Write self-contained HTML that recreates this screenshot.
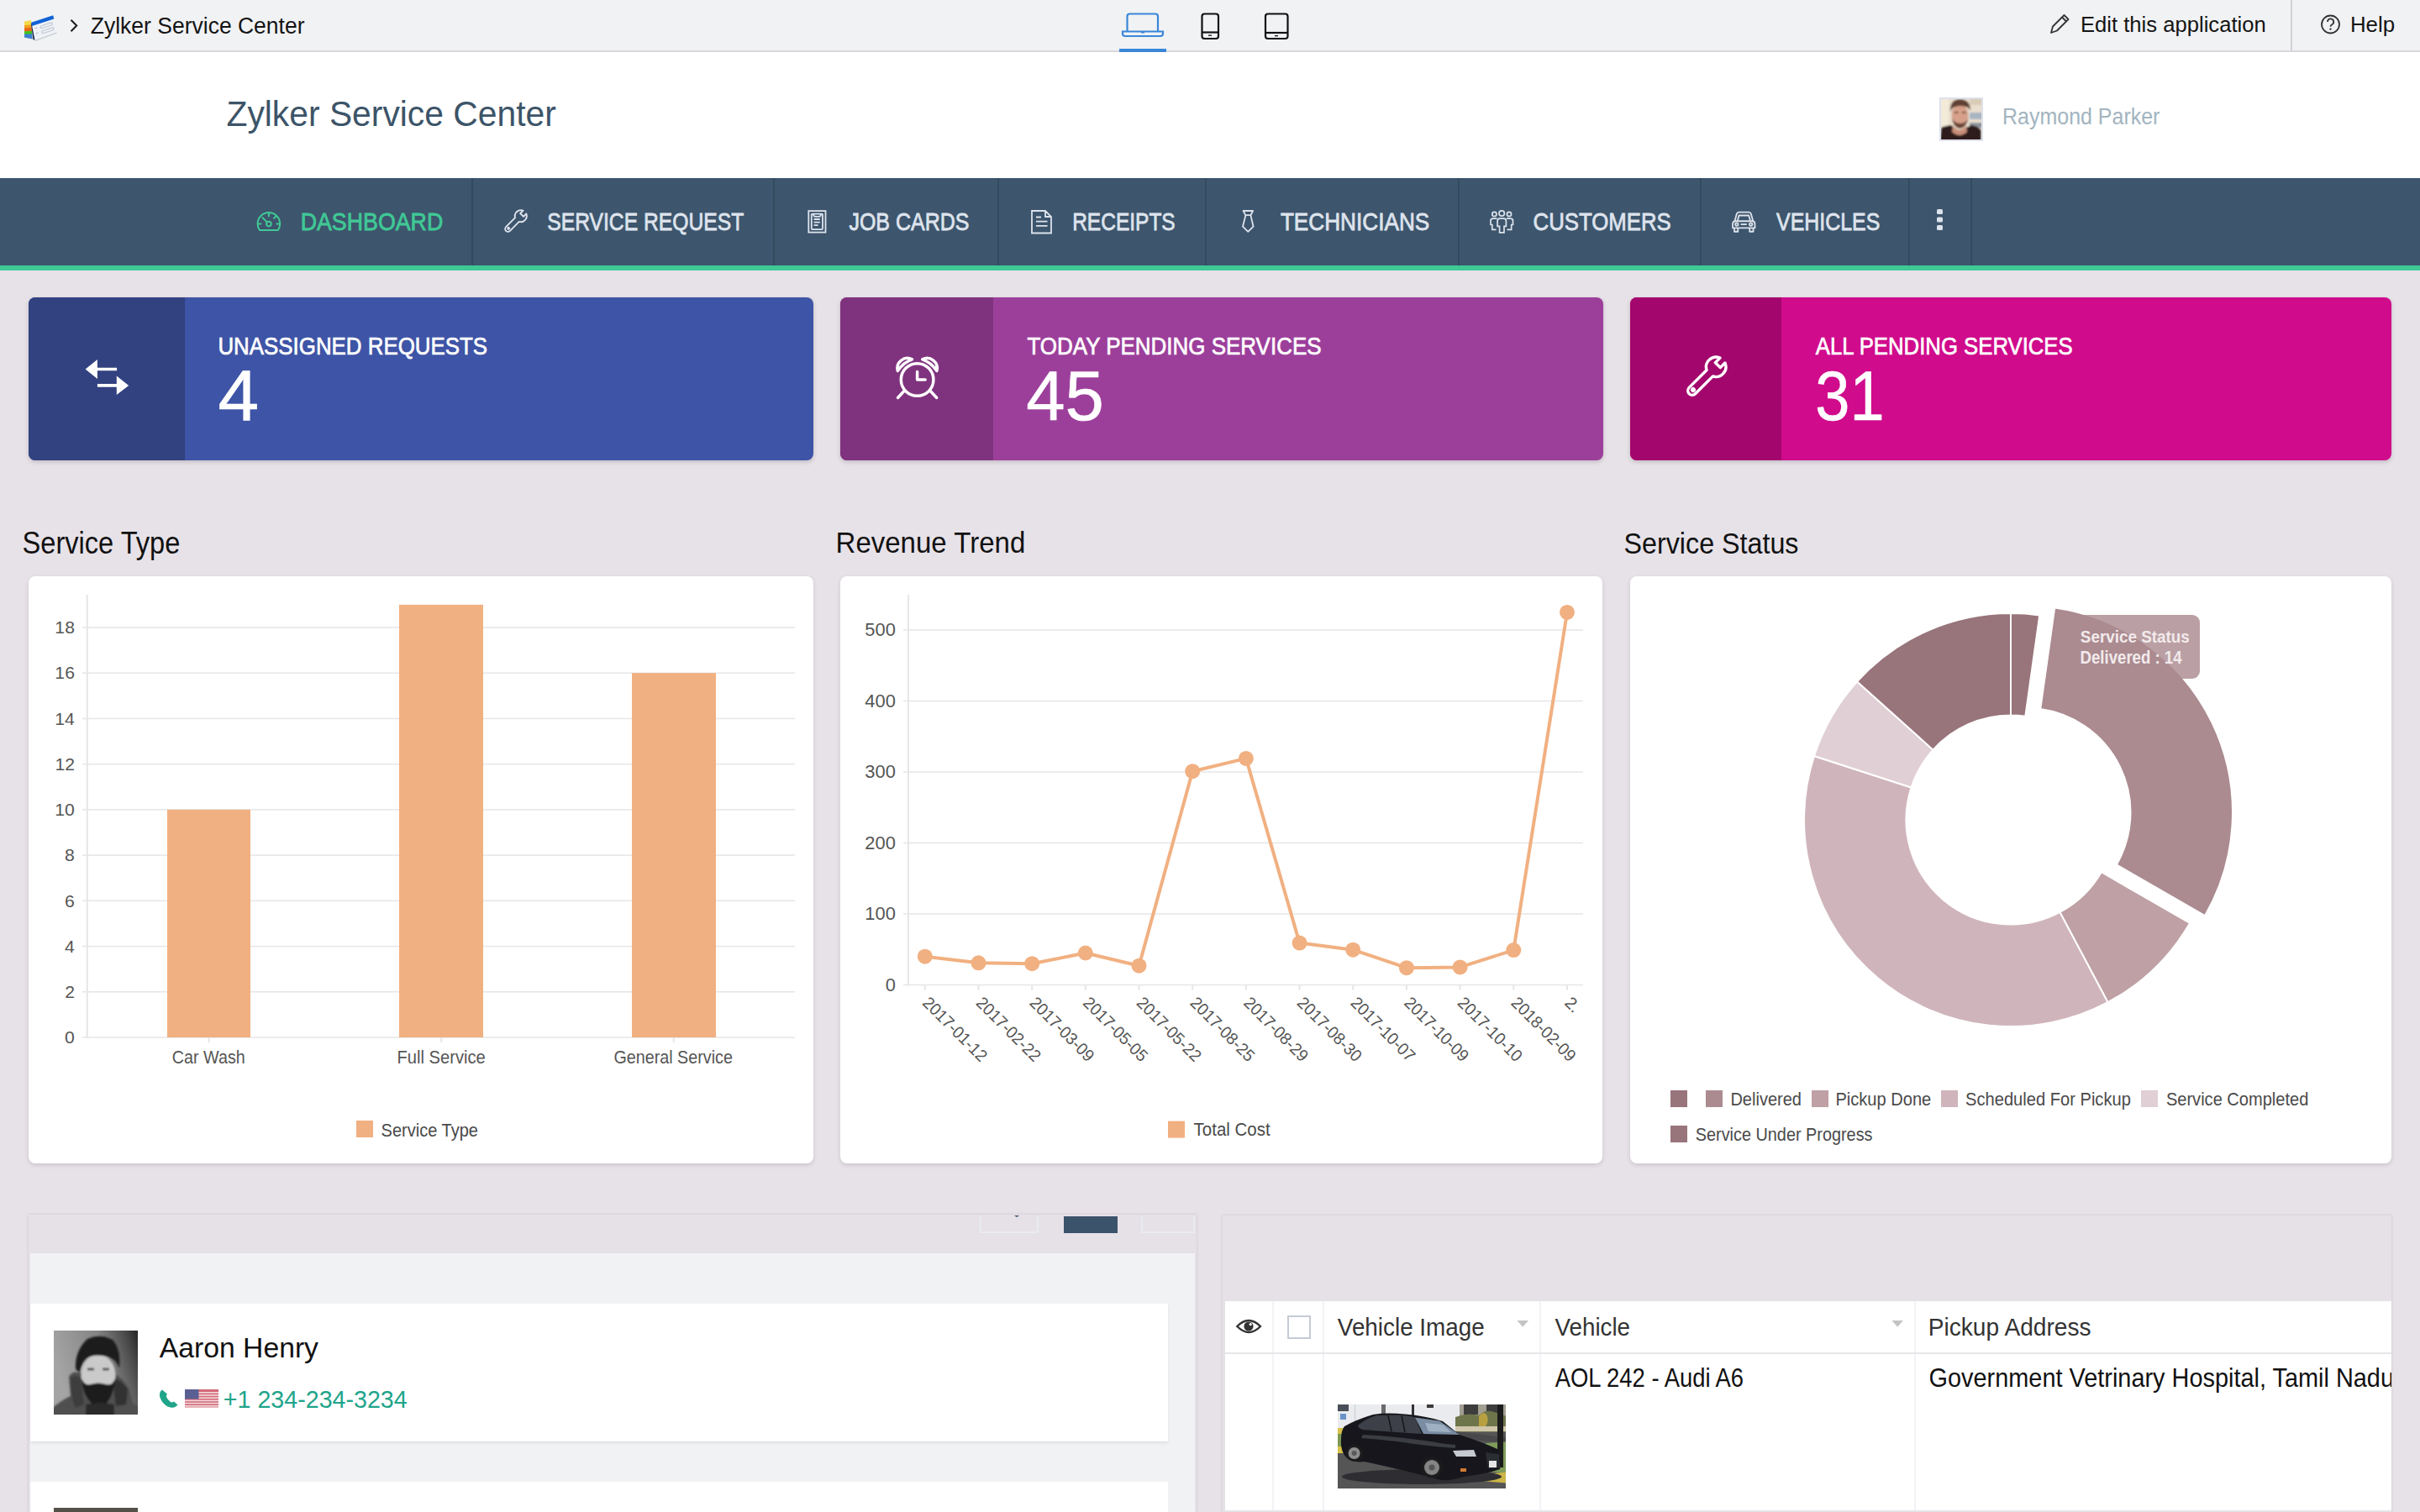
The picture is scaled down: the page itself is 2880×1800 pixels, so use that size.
<!DOCTYPE html>
<html><head><meta charset="utf-8"><title>Zylker Service Center</title>
<style>
*{margin:0;padding:0;box-sizing:border-box}
html,body{width:2880px;height:1800px;overflow:hidden;background:#e7e2e8;font-family:"Liberation Sans",sans-serif}
svg text{font-family:"Liberation Sans",sans-serif}
</style></head><body>
<div style="position:absolute;left:0px;top:0px;width:2880px;height:60px;background:#f1f2f4"></div>
<div style="position:absolute;left:0px;top:61px;width:2880px;height:151px;background:#fff"></div>
<div style="position:absolute;left:0px;top:60px;width:2880px;height:2px;background:#d8d8da"></div>
<div style="position:absolute;left:0px;top:212px;width:2880px;height:104px;background:#3d556d"></div>
<div style="position:absolute;left:0px;top:316px;width:2880px;height:6px;background:#40c895"></div>
<div style="position:absolute;left:34px;top:354px;width:934px;height:194px;border-radius:8px;overflow:hidden;background:#3e54a6;box-shadow:0 2px 5px rgba(60,40,60,.22)"><div style="position:absolute;left:0;top:0;width:186px;height:194px;background:#32417f"></div></div>
<div style="position:absolute;left:1000px;top:354px;width:908px;height:194px;border-radius:8px;overflow:hidden;background:#9c3f9b;box-shadow:0 2px 5px rgba(60,40,60,.22)"><div style="position:absolute;left:0;top:0;width:182px;height:194px;background:#7f337e"></div></div>
<div style="position:absolute;left:1940px;top:354px;width:906px;height:194px;border-radius:8px;overflow:hidden;background:#d00b8c;box-shadow:0 2px 5px rgba(60,40,60,.22)"><div style="position:absolute;left:0;top:0;width:180px;height:194px;background:#a3066c"></div></div>
<div style="position:absolute;left:34px;top:686px;width:934px;height:699px;background:#fff;border-radius:8px;box-shadow:0 2px 5px rgba(60,40,60,.16)"></div>
<div style="position:absolute;left:1000px;top:686px;width:907px;height:699px;background:#fff;border-radius:8px;box-shadow:0 2px 5px rgba(60,40,60,.16)"></div>
<div style="position:absolute;left:1940px;top:686px;width:906px;height:699px;background:#fff;border-radius:8px;box-shadow:0 2px 5px rgba(60,40,60,.16)"></div>
<div style="position:absolute;left:34px;top:1446px;width:1390px;height:354px;background:#e6e1e7;box-shadow:0 0 3px rgba(60,40,60,.18)"></div>
<div style="position:absolute;left:36px;top:1492px;width:1386px;height:308px;background:#f1f2f4"></div>
<div style="position:absolute;left:36px;top:1552px;width:1354px;height:164px;background:#fff;box-shadow:0 2px 3px rgba(0,0,0,.08)"></div>
<div style="position:absolute;left:36px;top:1764px;width:1354px;height:40px;background:#fff"></div>
<div style="position:absolute;left:1455px;top:1447px;width:1391px;height:353px;background:#e6e1e7;box-shadow:0 0 3px rgba(60,40,60,.18)"></div>
<div style="position:absolute;left:1458px;top:1549px;width:1388px;height:251px;background:#fff"></div>
<div style="position:absolute;left:1332px;top:58px;width:56px;height:4px;background:#3a86d8"></div>
<div style="position:absolute;left:2726px;top:0px;width:2px;height:60px;background:#d2d3d6"></div>
<div style="position:absolute;left:561px;top:212px;width:2px;height:104px;background:#344a5f"></div>
<div style="position:absolute;left:920px;top:212px;width:2px;height:104px;background:#344a5f"></div>
<div style="position:absolute;left:1187px;top:212px;width:2px;height:104px;background:#344a5f"></div>
<div style="position:absolute;left:1434px;top:212px;width:2px;height:104px;background:#344a5f"></div>
<div style="position:absolute;left:1735px;top:212px;width:2px;height:104px;background:#344a5f"></div>
<div style="position:absolute;left:2023px;top:212px;width:2px;height:104px;background:#344a5f"></div>
<div style="position:absolute;left:2271px;top:212px;width:2px;height:104px;background:#344a5f"></div>
<div style="position:absolute;left:2345px;top:212px;width:2px;height:104px;background:#344a5f"></div>
<div style="position:absolute;left:1266px;top:1448px;width:64px;height:20px;background:#3b536b"></div>
<div style="position:absolute;left:1514px;top:1549px;width:2px;height:251px;background:#f3f3f5"></div>
<div style="position:absolute;left:1574px;top:1549px;width:2px;height:251px;background:#f3f3f5"></div>
<div style="position:absolute;left:1832px;top:1549px;width:2px;height:251px;background:#f3f3f5"></div>
<div style="position:absolute;left:2278px;top:1549px;width:2px;height:251px;background:#f3f3f5"></div>
<div style="position:absolute;left:1458px;top:1610px;width:1388px;height:2px;background:#e6e6ea"></div>
<div style="position:absolute;left:1458px;top:1798px;width:1388px;height:2px;background:#e4e4e8"></div>
<svg style="position:absolute;left:0;top:0" width="2880" height="1800" viewBox="0 0 2880 1800">
<text x="107.81" y="40.20" font-size="28.20" fill="#141414" font-weight="normal" textLength="254.70" lengthAdjust="spacingAndGlyphs">Zylker Service Center</text>
<polyline points="84.5,23.8 91.2,30.5 84.5,37.2" fill="none" stroke="#1a1a1a" stroke-width="2"/>
<g>
<polygon points="29,25.5 37,24 38.5,46.5 29,44.5" fill="#f5d94a"/>
<polygon points="29,30 37.3,29.5 37.6,34 29,34.5" fill="#f0a020"/>
<polygon points="29,33.5 37.6,33 37.9,37.5 29,37.5" fill="#e8641c"/>
<polygon points="29,37.3 37.9,37 38.2,41 29,40.8" fill="#3fc21e"/>
<polygon points="29,40.5 38.2,40.5 38.5,46.5 29,44.5" fill="#3a7fd8"/>
<polygon points="36.8,28 38.5,27 41.8,47.8 39.5,47.2" fill="#1b2a55"/>
<polygon points="37.6,28.2 63.8,19.5 67.4,38.6 41.6,47.8" fill="#eef2f7"/>
<polygon points="37.2,26.8 63.2,18.2 64.2,22.4 38,31" fill="#1262d6"/>
<path d="M48.5,31 L61.5,26.8 q1.5,1.5 0.3,2.9 L49.3,33.7 q-1.8,-1 -0.8,-2.7z" fill="none" stroke="#c4c8cf" stroke-width="1.2"/>
<path d="M50,37 L63,32.8 q1.5,1.5 0.3,2.9 L50.8,39.7 q-1.8,-1 -0.8,-2.7z" fill="none" stroke="#c4c8cf" stroke-width="1.2"/>
<path d="M41.5,34 l3,-1 M42.5,40 l3,-1" stroke="#b8bcc4" stroke-width="1.2"/>
<polygon points="41.6,47.8 67.4,38.6 67.5,39.8 42,49" fill="#c8ccd4"/>
</g>
<g fill="none" stroke-width="2.2">
<path d="M1341.5,37 V19.5 a3,3 0 0 1 3,-3 H1375 a3,3 0 0 1 3,3 V37" stroke="#3a86d8"/>
<path d="M1336,37.5 H1384 V40 a3,3 0 0 1 -3,3 H1339 a3,3 0 0 1 -3,-3 Z" stroke="#3a86d8"/>
<rect x="1358" y="37.5" width="4" height="2" fill="#3a86d8" stroke="none"/>
<rect x="1430.5" y="16.5" width="19.5" height="29.5" rx="3" stroke="#111"/>
<line x1="1430.5" y1="38.5" x2="1450" y2="38.5" stroke="#111"/>
<rect x="1438" y="41.5" width="4" height="1.3" fill="#111" stroke="none"/>
<rect x="1506" y="16.5" width="26.5" height="29.5" rx="3" stroke="#111"/>
<line x1="1506" y1="39" x2="1532.5" y2="39" stroke="#111"/>
<rect x="1517" y="42" width="4" height="1.3" fill="#111" stroke="none"/>
</g>
<path d="M2441,39 L2443,31.5 L2456.5,18 L2461.5,23 L2448,36.5 Z M2454,20.5 L2459,25.5" fill="none" stroke="#333" stroke-width="1.8" stroke-linejoin="round"/>
<text x="2475.95" y="37.70" font-size="26.02" fill="#141414" font-weight="normal" textLength="220.75" lengthAdjust="spacingAndGlyphs">Edit this application</text>
<circle cx="2773.5" cy="29" r="10.5" fill="none" stroke="#333" stroke-width="1.8"/>
<path d="M2770,26 a3.6,3.6 0 1 1 5.2,3.2 c-1.2,.6 -1.7,1.2 -1.7,2.6" fill="none" stroke="#333" stroke-width="1.8"/><circle cx="2773.5" cy="34.6" r="1.2" fill="#333"/>
<text x="2796.93" y="37.70" font-size="26.02" fill="#141414" font-weight="normal" textLength="53.15" lengthAdjust="spacingAndGlyphs">Help</text>
<text x="269.48" y="150.30" font-size="43.31" fill="#3c5468" font-weight="normal" textLength="392.30" lengthAdjust="spacingAndGlyphs">Zylker Service Center</text>
<text x="2383.00" y="148.30" font-size="27.03" fill="#a2b4c0" font-weight="normal" textLength="187.45" lengthAdjust="spacingAndGlyphs">Raymond Parker</text>
<defs><filter id="bl1" x="-10%" y="-10%" width="120%" height="120%"><feGaussianBlur stdDeviation="1.2"/></filter>
<clipPath id="cpa"><rect x="2310" y="118" width="48" height="48"/></clipPath></defs>
<rect x="2308" y="116" width="52" height="52" fill="#dde1ec"/>
<g clip-path="url(#cpa)"><g filter="url(#bl1)">
<rect x="2305" y="113" width="58" height="58" fill="#eadfcf"/>
<rect x="2305" y="113" width="14" height="40" fill="#f3ead8"/>
<rect x="2344" y="113" width="19" height="12" fill="#d9cbb5"/>
<rect x="2344" y="134" width="19" height="8" fill="#a9b4c2"/>
<rect x="2344" y="146" width="19" height="6" fill="#8e949c"/>
<path d="M2310,152 q4,-2 12,-3 l4,3 q6,8 14,0 l6,-3 q8,1 12,6 v20 h-50z" fill="#2e1f1f"/>
<path d="M2324,150 q7,9 16,0 l1,7 q-9,8 -18,0z" fill="#c98f78"/>
<ellipse cx="2332.5" cy="137" rx="10" ry="13" fill="#d6a08a"/>
<path d="M2321,133 q-1,-14 11,-15 q13,0 13,14 q-2,-6 -12,-6 q-10,0 -12,7z" fill="#5e3f33"/>
<path d="M2323,140 q1,12 9.5,13 q8.5,-1 10,-13 q-2,7 -9.5,7 q-8,0 -10,-7z" fill="#6a4536"/>
<rect x="2326" y="133" width="4.5" height="1.8" fill="#6e4a3a"/><rect x="2335" y="133" width="4.5" height="1.8" fill="#6e4a3a"/>
</g></g>
<text x="357.66" y="274.00" font-size="29.43" fill="#40c895" font-weight="normal" textLength="169.64" lengthAdjust="spacingAndGlyphs" stroke="#40c895" stroke-width="0.8">DASHBOARD</text>
<text x="651.19" y="274.00" font-size="29.43" fill="#dde3ec" font-weight="normal" textLength="234.19" lengthAdjust="spacingAndGlyphs" stroke="#dde3ec" stroke-width="0.8">SERVICE REQUEST</text>
<text x="1010.43" y="274.00" font-size="29.43" fill="#dde3ec" font-weight="normal" textLength="142.98" lengthAdjust="spacingAndGlyphs" stroke="#dde3ec" stroke-width="0.8">JOB CARDS</text>
<text x="1276.14" y="274.00" font-size="29.43" fill="#dde3ec" font-weight="normal" textLength="122.59" lengthAdjust="spacingAndGlyphs" stroke="#dde3ec" stroke-width="0.8">RECEIPTS</text>
<text x="1523.88" y="274.00" font-size="29.43" fill="#dde3ec" font-weight="normal" textLength="177.39" lengthAdjust="spacingAndGlyphs" stroke="#dde3ec" stroke-width="0.8">TECHNICIANS</text>
<text x="1824.61" y="274.00" font-size="29.43" fill="#dde3ec" font-weight="normal" textLength="164.18" lengthAdjust="spacingAndGlyphs" stroke="#dde3ec" stroke-width="0.8">CUSTOMERS</text>
<text x="2114.08" y="274.00" font-size="29.43" fill="#dde3ec" font-weight="normal" textLength="123.18" lengthAdjust="spacingAndGlyphs" stroke="#dde3ec" stroke-width="0.8">VEHICLES</text>
<g fill="none" stroke="#40c895" stroke-width="2" stroke-linecap="round">
<path d="M309.1,274.1 A13.3,13.3 0 1 1 330.7,274.1 Z" stroke-linejoin="round"/>
<path d="M319.9,253.5 v4 M328.6,257.6 l-2.6,2.2 M307,266.5 h3.4 M332.8,266.5 h-3.4"/>
<circle cx="319.9" cy="266.6" r="2.8"/><path d="M317.9,264.6 L312.6,259.3"/>
</g>
<g transform="translate(619.8,257.2) rotate(45) scale(0.6)"><path d="M-4.5,-10.80 L-4.5,-3 L4.5,-3 L4.5,-10.80 A11.7,11.7 0 0 1 5.6,10.27 L5.6,36 A5.6,5.6 0 0 1 -5.6,36 L-5.6,10.27 A11.7,11.7 0 0 1 -4.5,-10.80 Z" fill="none" stroke="#dde3ec" stroke-width="3.17" stroke-linejoin="round"/><circle cx="0" cy="34.5" r="3.2" fill="#dde3ec"/></g>
<g fill="none" stroke="#dde3ec" stroke-width="1.8">
<rect x="962.3" y="251.1" width="20.2" height="25.5"/>
<rect x="965.8" y="254.6" width="13.2" height="18.5" rx="1"/>
<path d="M968,255 q0,2.8 2.5,2.8 h4 q2.5,0 2.5,-2.8"/>
<path d="M968.6,261 h7.2 M968.6,264.6 h7.2 M968.6,268.1 h5"/>
</g>
<g fill="none" stroke="#dde3ec" stroke-width="1.8" stroke-linejoin="miter">
<path d="M1228,251 h16 l7,7 v19.5 h-23z M1244,251 v7 h7"/>
<path d="M1233,258.5 h6 M1233,263.7 h13.5 M1233,268.8 h13.5"/>
</g>
<g fill="none" stroke="#dde3ec" stroke-width="1.8" stroke-linejoin="round">
<path d="M1479.6,251 h11.5 l-2.6,5.2 h-6.3z M1482.4,256.2 L1479,269.7 L1485.3,275.9 L1491.6,269.7 L1488.4,256.2"/>
</g>
<g fill="none" stroke="#dde3ec" stroke-width="1.7">
<circle cx="1778.4" cy="254.9" r="2.6"/><circle cx="1787.2" cy="254" r="3.2"/><circle cx="1796" cy="254.9" r="2.6"/>
<path d="M1784.6,276.8 V269.4 H1782.1 V263 q0,-2.8 2.8,-2.8 h4.7 q2.8,0 2.8,2.8 V269.4 H1790 V276.8 Z"/>
<path d="M1780.6,273.4 H1775.8 V267.5 H1774 V263 q0,-2.8 2.8,-2.8 H1781.5"/>
<path d="M1793.4,273.4 H1798.7 V267.5 H1800.5 V263 q0,-2.8 -2.8,-2.8 H1793"/>
</g>
<g fill="none" stroke="#dde3ec" stroke-width="1.9" stroke-linejoin="round" transform="translate(2075.5,264.2) scale(0.96) translate(-2077.5,-263.5)">
<path d="M2066,262.5 l2.5,-9 q0.6,-2 2.6,-2 h12.5 q2,0 2.6,2 l2.5,9"/>
<path d="M2069.5,262 l1.8,-6.5 h12.2 l1.8,6.5"/>
<path d="M2063.5,271 v-5 q0,-3.5 3.5,-3.5 h20.5 q3.5,0 3.5,3.5 v5z"/>
<path d="M2065.5,271 v4.5 h4.5 v-4.5 M2084.5,271 v4.5 h4.5 v-4.5"/>
<circle cx="2068.5" cy="266.5" r="1.8"/><circle cx="2086" cy="266.5" r="1.8"/>
<path d="M2073.5,266.5 h7.5"/>
</g>
<g fill="#dde3ec"><rect x="2305" y="249" width="7" height="6" rx="1.5"/><rect x="2305" y="258.5" width="7" height="6" rx="1.5"/><rect x="2305" y="268" width="7" height="6" rx="1.5"/></g>
<text x="259.41" y="422.00" font-size="29.50" fill="#fff" font-weight="normal" textLength="320.74" lengthAdjust="spacingAndGlyphs" stroke="#fff" stroke-width="0.7">UNASSIGNED REQUESTS</text>
<text x="1222.43" y="422.00" font-size="29.50" fill="#fff" font-weight="normal" textLength="350.11" lengthAdjust="spacingAndGlyphs" stroke="#fff" stroke-width="0.7">TODAY PENDING SERVICES</text>
<text x="2160.75" y="422.00" font-size="29.64" fill="#fff" font-weight="normal" textLength="305.95" lengthAdjust="spacingAndGlyphs" stroke="#fff" stroke-width="0.7">ALL PENDING SERVICES</text>
<text x="259.55" y="500.00" font-size="84.35" fill="#fff" font-weight="normal" textLength="48.68" lengthAdjust="spacingAndGlyphs" stroke="#fff" stroke-width="0.6">4</text>
<text x="1221.24" y="500.00" font-size="83.91" fill="#fff" font-weight="normal" textLength="92.59" lengthAdjust="spacingAndGlyphs" stroke="#fff" stroke-width="0.6">45</text>
<text x="2160.34" y="500.00" font-size="83.86" fill="#fff" font-weight="normal" textLength="82.26" lengthAdjust="spacingAndGlyphs" stroke="#fff" stroke-width="0.6">31</text>
<g fill="#fff">
<path d="M101.6,439.5 L115.9,428 V437.8 H139.1 V441.2 H115.9 V451 Z"/>
<path d="M153.2,459 L138.8,447.6 V457.1 H115.9 V460.8 H138.8 V470.1 Z"/>
</g>
<g fill="none" stroke="#fff" stroke-width="3.5" stroke-linecap="round" stroke-linejoin="round">
<circle cx="1091.6" cy="452" r="19.3"/>
<path d="M1091.6,442.5 v9.5 h9.5"/>
<path d="M1068.3,441.5 A12,12 0 0 1 1085.5,427.8 Q1075.5,431 1068.3,441.5 Z"/>
<path d="M1114.9,441.5 A12,12 0 0 0 1097.7,427.8 Q1107.7,431 1114.9,441.5 Z"/>
<path d="M1075.5,466 l-7,7.5 M1107.7,466 l7,7.5"/>
</g>
<g transform="translate(2042.2,436.8) rotate(45) scale(1.0)"><path d="M-4.2,-10.92 L-4.2,-3 L4.2,-3 L4.2,-10.92 A11.7,11.7 0 0 1 5.2,10.48 L5.2,40 A5.2,5.2 0 0 1 -5.2,40 L-5.2,10.48 A11.7,11.7 0 0 1 -4.2,-10.92 Z" fill="none" stroke="#fff" stroke-width="3.40" stroke-linejoin="round"/><circle cx="0" cy="38.5" r="3" fill="#fff"/></g>
<text x="26.53" y="659.00" font-size="36.34" fill="#111" font-weight="normal" textLength="187.81" lengthAdjust="spacingAndGlyphs">Service Type</text>
<text x="994.56" y="658.00" font-size="34.16" fill="#111" font-weight="normal" textLength="225.69" lengthAdjust="spacingAndGlyphs">Revenue Trend</text>
<text x="1932.55" y="658.50" font-size="34.88" fill="#111" font-weight="normal" textLength="207.96" lengthAdjust="spacingAndGlyphs">Service Status</text>
<rect x="102.7" y="708" width="2" height="528.0" fill="#e6e6e6"/>
<rect x="98" y="1234.25" width="848" height="1.5" fill="#e6e6e6"/>
<text x="77.01" y="1242.20" font-size="21.14" fill="#555555" font-weight="normal" textLength="11.76" lengthAdjust="spacingAndGlyphs">0</text>
<rect x="98" y="1180.03" width="848" height="1.5" fill="#e6e6e6"/>
<text x="77.32" y="1187.98" font-size="21.14" fill="#555555" font-weight="normal" textLength="11.76" lengthAdjust="spacingAndGlyphs">2</text>
<rect x="98" y="1125.81" width="848" height="1.5" fill="#e6e6e6"/>
<text x="76.90" y="1133.76" font-size="21.14" fill="#555555" font-weight="normal" textLength="11.76" lengthAdjust="spacingAndGlyphs">4</text>
<rect x="98" y="1071.59" width="848" height="1.5" fill="#e6e6e6"/>
<text x="77.11" y="1079.54" font-size="21.14" fill="#555555" font-weight="normal" textLength="11.76" lengthAdjust="spacingAndGlyphs">6</text>
<rect x="98" y="1017.37" width="848" height="1.5" fill="#e6e6e6"/>
<text x="77.11" y="1025.32" font-size="21.14" fill="#555555" font-weight="normal" textLength="11.76" lengthAdjust="spacingAndGlyphs">8</text>
<rect x="98" y="963.15" width="848" height="1.5" fill="#e6e6e6"/>
<text x="65.27" y="971.10" font-size="21.14" fill="#555555" font-weight="normal" textLength="23.52" lengthAdjust="spacingAndGlyphs">10</text>
<rect x="98" y="908.93" width="848" height="1.5" fill="#e6e6e6"/>
<text x="65.59" y="916.88" font-size="21.14" fill="#555555" font-weight="normal" textLength="23.52" lengthAdjust="spacingAndGlyphs">12</text>
<rect x="98" y="854.71" width="848" height="1.5" fill="#e6e6e6"/>
<text x="65.17" y="862.66" font-size="21.14" fill="#555555" font-weight="normal" textLength="23.52" lengthAdjust="spacingAndGlyphs">14</text>
<rect x="98" y="800.49" width="848" height="1.5" fill="#e6e6e6"/>
<text x="65.38" y="808.44" font-size="21.14" fill="#555555" font-weight="normal" textLength="23.52" lengthAdjust="spacingAndGlyphs">16</text>
<rect x="98" y="746.27" width="848" height="1.5" fill="#e6e6e6"/>
<text x="65.38" y="754.22" font-size="21.14" fill="#555555" font-weight="normal" textLength="23.52" lengthAdjust="spacingAndGlyphs">18</text>
<rect x="199" y="963.9" width="99" height="271.1" fill="#f1b081"/>
<rect x="475" y="719.9" width="100" height="515.1" fill="#f1b081"/>
<rect x="752" y="801.2" width="100" height="433.8" fill="#f1b081"/>
<rect x="247.7" y="1235.0" width="2" height="6" fill="#e6e6e6"/>
<rect x="524.2" y="1235.0" width="2" height="6" fill="#e6e6e6"/>
<rect x="800.8" y="1235.0" width="2" height="6" fill="#e6e6e6"/>
<text x="204.81" y="1265.70" font-size="22.24" fill="#555555" font-weight="normal" textLength="87.04" lengthAdjust="spacingAndGlyphs">Car Wash</text>
<text x="472.39" y="1265.70" font-size="22.24" fill="#555555" font-weight="normal" textLength="105.40" lengthAdjust="spacingAndGlyphs">Full Service</text>
<text x="730.41" y="1265.70" font-size="22.24" fill="#555555" font-weight="normal" textLength="141.48" lengthAdjust="spacingAndGlyphs">General Service</text>
<rect x="424" y="1334" width="20" height="20" fill="#f1b081"/>
<text x="453.60" y="1352.50" font-size="22.82" fill="#4a4a4a" font-weight="normal" textLength="115.35" lengthAdjust="spacingAndGlyphs">Service Type</text>
<rect x="1080" y="708" width="2" height="465.5" fill="#e6e6e6"/>
<rect x="1075" y="1171.75" width="809" height="1.5" fill="#e6e6e6"/>
<text x="1053.63" y="1179.90" font-size="21.86" fill="#555555" font-weight="normal" textLength="12.16" lengthAdjust="spacingAndGlyphs">0</text>
<rect x="1075" y="1087.25" width="809" height="1.5" fill="#e6e6e6"/>
<text x="1029.37" y="1095.40" font-size="21.86" fill="#555555" font-weight="normal" textLength="36.47" lengthAdjust="spacingAndGlyphs">100</text>
<rect x="1075" y="1002.75" width="809" height="1.5" fill="#e6e6e6"/>
<text x="1029.37" y="1010.90" font-size="21.86" fill="#555555" font-weight="normal" textLength="36.47" lengthAdjust="spacingAndGlyphs">200</text>
<rect x="1075" y="918.25" width="809" height="1.5" fill="#e6e6e6"/>
<text x="1029.37" y="926.40" font-size="21.86" fill="#555555" font-weight="normal" textLength="36.47" lengthAdjust="spacingAndGlyphs">300</text>
<rect x="1075" y="833.75" width="809" height="1.5" fill="#e6e6e6"/>
<text x="1029.37" y="841.90" font-size="21.86" fill="#555555" font-weight="normal" textLength="36.47" lengthAdjust="spacingAndGlyphs">400</text>
<rect x="1075" y="749.25" width="809" height="1.5" fill="#e6e6e6"/>
<text x="1029.37" y="757.40" font-size="21.86" fill="#555555" font-weight="normal" textLength="36.47" lengthAdjust="spacingAndGlyphs">500</text>
<rect x="1099.8" y="1172.5" width="2" height="6" fill="#e6e6e6"/>
<rect x="1163.5" y="1172.5" width="2" height="6" fill="#e6e6e6"/>
<rect x="1227.2" y="1172.5" width="2" height="6" fill="#e6e6e6"/>
<rect x="1290.8" y="1172.5" width="2" height="6" fill="#e6e6e6"/>
<rect x="1354.5" y="1172.5" width="2" height="6" fill="#e6e6e6"/>
<rect x="1418.2" y="1172.5" width="2" height="6" fill="#e6e6e6"/>
<rect x="1481.9" y="1172.5" width="2" height="6" fill="#e6e6e6"/>
<rect x="1545.6" y="1172.5" width="2" height="6" fill="#e6e6e6"/>
<rect x="1609.2" y="1172.5" width="2" height="6" fill="#e6e6e6"/>
<rect x="1672.9" y="1172.5" width="2" height="6" fill="#e6e6e6"/>
<rect x="1736.6" y="1172.5" width="2" height="6" fill="#e6e6e6"/>
<rect x="1800.3" y="1172.5" width="2" height="6" fill="#e6e6e6"/>
<rect x="1864.0" y="1172.5" width="2" height="6" fill="#e6e6e6"/>
<polyline points="1100.8,1138.7 1164.5,1146.3 1228.2,1147.2 1291.8,1134.5 1355.5,1149.7 1419.2,918.2 1482.9,902.9 1546.6,1122.6 1610.2,1130.7 1673.9,1152.2 1737.6,1151.4 1801.3,1131.1 1865.0,728.9" fill="none" stroke="#f1b081" stroke-width="4" stroke-linejoin="round"/>
<circle cx="1100.8" cy="1138.7" r="9" fill="#f1b081"/>
<circle cx="1164.5" cy="1146.3" r="9" fill="#f1b081"/>
<circle cx="1228.2" cy="1147.2" r="9" fill="#f1b081"/>
<circle cx="1291.8" cy="1134.5" r="9" fill="#f1b081"/>
<circle cx="1355.5" cy="1149.7" r="9" fill="#f1b081"/>
<circle cx="1419.2" cy="918.2" r="9" fill="#f1b081"/>
<circle cx="1482.9" cy="902.9" r="9" fill="#f1b081"/>
<circle cx="1546.6" cy="1122.6" r="9" fill="#f1b081"/>
<circle cx="1610.2" cy="1130.7" r="9" fill="#f1b081"/>
<circle cx="1673.9" cy="1152.2" r="9" fill="#f1b081"/>
<circle cx="1737.6" cy="1151.4" r="9" fill="#f1b081"/>
<circle cx="1801.3" cy="1131.1" r="9" fill="#f1b081"/>
<circle cx="1865.0" cy="728.9" r="9" fill="#f1b081"/>
<g transform="translate(1096.8,1195) rotate(45)"><text x="0" y="0" font-size="20" fill="#555555" textLength="99" lengthAdjust="spacingAndGlyphs">2017-01-12</text></g>
<g transform="translate(1160.5,1195) rotate(45)"><text x="0" y="0" font-size="20" fill="#555555" textLength="99" lengthAdjust="spacingAndGlyphs">2017-02-22</text></g>
<g transform="translate(1224.2,1195) rotate(45)"><text x="0" y="0" font-size="20" fill="#555555" textLength="99" lengthAdjust="spacingAndGlyphs">2017-03-09</text></g>
<g transform="translate(1287.8,1195) rotate(45)"><text x="0" y="0" font-size="20" fill="#555555" textLength="99" lengthAdjust="spacingAndGlyphs">2017-05-05</text></g>
<g transform="translate(1351.5,1195) rotate(45)"><text x="0" y="0" font-size="20" fill="#555555" textLength="99" lengthAdjust="spacingAndGlyphs">2017-05-22</text></g>
<g transform="translate(1415.2,1195) rotate(45)"><text x="0" y="0" font-size="20" fill="#555555" textLength="99" lengthAdjust="spacingAndGlyphs">2017-08-25</text></g>
<g transform="translate(1478.9,1195) rotate(45)"><text x="0" y="0" font-size="20" fill="#555555" textLength="99" lengthAdjust="spacingAndGlyphs">2017-08-29</text></g>
<g transform="translate(1542.6,1195) rotate(45)"><text x="0" y="0" font-size="20" fill="#555555" textLength="99" lengthAdjust="spacingAndGlyphs">2017-08-30</text></g>
<g transform="translate(1606.2,1195) rotate(45)"><text x="0" y="0" font-size="20" fill="#555555" textLength="99" lengthAdjust="spacingAndGlyphs">2017-10-07</text></g>
<g transform="translate(1669.9,1195) rotate(45)"><text x="0" y="0" font-size="20" fill="#555555" textLength="99" lengthAdjust="spacingAndGlyphs">2017-10-09</text></g>
<g transform="translate(1733.6,1195) rotate(45)"><text x="0" y="0" font-size="20" fill="#555555" textLength="99" lengthAdjust="spacingAndGlyphs">2017-10-10</text></g>
<g transform="translate(1797.3,1195) rotate(45)"><text x="0" y="0" font-size="20" fill="#555555" textLength="99" lengthAdjust="spacingAndGlyphs">2018-02-09</text></g>
<g transform="translate(1861.0,1195) rotate(45)"><text x="0" y="0" font-size="20" fill="#555555">2.</text></g>
<rect x="1390" y="1334.6" width="20" height="20" fill="#f1b081"/>
<text x="1420.59" y="1352.00" font-size="21.22" fill="#4a4a4a" font-weight="normal" textLength="91.04" lengthAdjust="spacingAndGlyphs">Total Cost</text>
<path d="M2393.00,730.00 A246,246 0 0 1 2427.24,732.39 L2410.33,852.71 A124.5,124.5 0 0 0 2393.00,851.50 Z" fill="#98747b" stroke="#fff" stroke-width="2" stroke-linejoin="round"/>
<path d="M2445.21,723.63 A246,246 0 0 1 2624.02,1090.23 L2518.80,1029.48 A124.5,124.5 0 0 0 2428.30,843.94 Z" fill="#ab8b90" stroke="#fff" stroke-width="2" stroke-linejoin="round"/>
<path d="M2606.04,1099.00 A246,246 0 0 1 2508.49,1193.21 L2451.45,1085.93 A124.5,124.5 0 0 0 2500.82,1038.25 Z" fill="#bea0a5" stroke="#fff" stroke-width="2" stroke-linejoin="round"/>
<path d="M2508.49,1193.21 A246,246 0 0 1 2159.04,899.98 L2274.59,937.53 A124.5,124.5 0 0 0 2451.45,1085.93 Z" fill="#cfb5bb" stroke="#fff" stroke-width="2" stroke-linejoin="round"/>
<path d="M2159.04,899.98 A246,246 0 0 1 2210.19,811.39 L2300.48,892.69 A124.5,124.5 0 0 0 2274.59,937.53 Z" fill="#e0cfd4" stroke="#fff" stroke-width="2" stroke-linejoin="round"/>
<path d="M2210.19,811.39 A246,246 0 0 1 2393.00,730.00 L2393.00,851.50 A124.5,124.5 0 0 0 2300.48,892.69 Z" fill="#98747b" stroke="#fff" stroke-width="2" stroke-linejoin="round"/>
<rect x="2450" y="732" width="168" height="76" rx="9" fill="rgba(171,139,144,0.82)"/>
<text x="2475.83" y="764.50" font-size="21.08" fill="#f2eaec" font-weight="bold" textLength="129.97" lengthAdjust="spacingAndGlyphs">Service Status</text>
<text x="2475.59" y="790.00" font-size="21.80" fill="#f2eaec" font-weight="bold" textLength="120.97" lengthAdjust="spacingAndGlyphs">Delivered : 14</text>
<rect x="1988" y="1298" width="20" height="20" fill="#98747b"/>
<rect x="2030" y="1298" width="20" height="20" fill="#ab8b90"/>
<rect x="2156" y="1298" width="20" height="20" fill="#bea0a5"/>
<rect x="2310" y="1298" width="20" height="20" fill="#cfb5bb"/>
<rect x="2548" y="1298" width="20" height="20" fill="#e0cfd4"/>
<rect x="1988" y="1340" width="20" height="20" fill="#98747b"/>
<text x="2059.40" y="1316.40" font-size="22.97" fill="#4a4a4a" font-weight="normal" textLength="84.59" lengthAdjust="spacingAndGlyphs">Delivered</text>
<text x="2184.39" y="1316.40" font-size="22.97" fill="#4a4a4a" font-weight="normal" textLength="113.91" lengthAdjust="spacingAndGlyphs">Pickup Done</text>
<text x="2339.09" y="1316.40" font-size="22.97" fill="#4a4a4a" font-weight="normal" textLength="196.78" lengthAdjust="spacingAndGlyphs">Scheduled For Pickup</text>
<text x="2577.90" y="1316.40" font-size="22.97" fill="#4a4a4a" font-weight="normal" textLength="169.48" lengthAdjust="spacingAndGlyphs">Service Completed</text>
<text x="2017.81" y="1358.20" font-size="22.97" fill="#4a4a4a" font-weight="normal" textLength="210.70" lengthAdjust="spacingAndGlyphs">Service Under Progress</text>
<path d="M1167,1448 V1467 H1235 V1448 M1359,1448 V1467 H1421 V1448" fill="none" stroke="#e9ebef" stroke-width="2"/>
<path d="M1207,1447 h6 l-3,2z" fill="#3b536b"/>
<defs><filter id="bl2" x="-10%" y="-10%" width="120%" height="120%"><feGaussianBlur stdDeviation="1.3"/></filter>
<linearGradient id="avg" x1="0" y1="0.3" x2="1" y2="0"><stop offset="0" stop-color="#a4a4a4"/><stop offset="0.55" stop-color="#858585"/><stop offset="0.85" stop-color="#4a4a4a"/><stop offset="1" stop-color="#262626"/></linearGradient>
<clipPath id="cpb"><rect x="64" y="1584" width="100" height="100"/></clipPath></defs>
<g clip-path="url(#cpb)">
<rect x="64" y="1584" width="100" height="100" fill="url(#avg)"/>
<g filter="url(#bl2)" transform="translate(64,1584)">
<path d="M-5,100 L-5,95 Q10,82 20,78 L18,55 Q22,48 30,50 L70,50 Q82,55 90,70 L94,86 Q100,90 105,92 V105 H-5z" fill="#4f4f4f"/>
<path d="M20,56 Q26,52 32,56 L36,88 L26,92 Q20,80 20,56z" fill="#3c3c3c"/>
<path d="M70,56 Q80,58 88,70 L86,88 L74,90z" fill="#303030"/>
<ellipse cx="53" cy="53" rx="20.5" ry="24" fill="#cacaca"/>
<path d="M26,46 Q25,24 40,10 Q55,3 70,11 Q80,22 78,44 Q74,34 64,31 Q52,28 42,31 Q33,36 31,50z" fill="#1b1b1b"/>
<path d="M33,57 Q34,76 45,87 Q53,92 60,89 Q71,80 73,57 Q70,66 62,64 Q53,61 44,64 Q37,66 33,57z" fill="#1c1c1c"/>
<path d="M40,46 h8 M58,46 h8" stroke="#2e2e2e" stroke-width="2.6"/>
<path d="M38,88 Q55,84 72,88 V102 H38z" fill="#2a2a2a"/>
</g></g>
<text x="189.80" y="1616.40" font-size="34.01" fill="#111" font-weight="normal" textLength="189.17" lengthAdjust="spacingAndGlyphs">Aaron Henry</text>
<path d="M193,1654.5 q-3.5,2 -3,7.5 q1.5,7 8.5,12 q4.5,2.5 8.5,1.5 q3,-1 4.5,-3 l-4.5,-4 q-2,1.5 -4,0.5 q-3.5,-2.5 -5,-6 q-0.5,-2 1,-3.5 z" fill="#20a48a"/>
<g>
<rect x="220" y="1654" width="40" height="21.5" fill="#d46a78"/>
<rect x="220" y="1657" width="40" height="1.6" fill="#f1d9dd"/><rect x="220" y="1660.2" width="40" height="1.6" fill="#f1d9dd"/>
<rect x="220" y="1663.4" width="40" height="1.6" fill="#f1d9dd"/><rect x="220" y="1666.6" width="40" height="1.6" fill="#f1d9dd"/>
<rect x="220" y="1669.8" width="40" height="1.6" fill="#f1d9dd"/><rect x="220" y="1673" width="40" height="1.6" fill="#f1d9dd"/>
<rect x="220" y="1654" width="16.5" height="11.5" fill="#5a5f94"/>
</g>
<text x="265.87" y="1675.70" font-size="29.57" fill="#20a48a" font-weight="normal" textLength="218.81" lengthAdjust="spacingAndGlyphs">+1 234-234-3234</text>
<rect x="64" y="1795" width="100" height="5" fill="#555048"/>
<path d="M1472.3,1579 q13.7,-14 27.7,0 q-13.7,14 -27.7,0z" fill="none" stroke="#333" stroke-width="2.4"/>
<circle cx="1486" cy="1579" r="5.6" fill="#333"/><circle cx="1488.2" cy="1576.6" r="1.6" fill="#fff"/>
<rect x="1533" y="1567" width="26" height="26" fill="#fff" stroke="#c5cbd6" stroke-width="2"/>
<text x="1591.86" y="1589.60" font-size="29.36" fill="#333" font-weight="normal" textLength="174.85" lengthAdjust="spacingAndGlyphs">Vehicle Image</text>
<text x="1850.56" y="1589.60" font-size="29.36" fill="#333" font-weight="normal" textLength="89.48" lengthAdjust="spacingAndGlyphs">Vehicle</text>
<text x="2294.75" y="1589.60" font-size="29.36" fill="#333" font-weight="normal" textLength="193.77" lengthAdjust="spacingAndGlyphs">Pickup Address</text>
<path d="M1805.4,1572 h13.6 l-6.8,7.7z" fill="#c4c4c4"/>
<path d="M2251.4,1572 h13.6 l-6.8,7.7z" fill="#c4c4c4"/>
<text x="1850.70" y="1650.60" font-size="31.40" fill="#111" font-weight="normal" textLength="224.43" lengthAdjust="spacingAndGlyphs">AOL 242 - Audi A6</text>
<svg x="2297" y="1600" width="549" height="80" overflow="hidden"><text x="-1.44" y="50.60" font-size="31.40" fill="#111" font-weight="normal" textLength="553.39" lengthAdjust="spacingAndGlyphs">Government Vetrinary Hospital, Tamil Nadu</text></svg>
<defs><filter id="bl3" x="-5%" y="-5%" width="110%" height="110%"><feGaussianBlur stdDeviation="0.7"/></filter>
<clipPath id="cpc"><rect x="1592" y="1672" width="200" height="100"/></clipPath></defs>
<g clip-path="url(#cpc)"><g transform="translate(1592,1672)" filter="url(#bl3)">
<rect x="-3" y="-3" width="206" height="106" fill="#545456"/>
<rect x="-3" y="-3" width="148" height="40" fill="#e9ebee"/>
<rect x="0" y="0" width="13" height="8" fill="#4a5058"/><rect x="3" y="11" width="7" height="7" fill="#6a94c8"/>
<rect x="20" y="0" width="1" height="28" fill="#c9ccd0"/>
<rect x="52" y="-3" width="5" height="14" fill="#6a6a6a"/><rect x="88" y="-3" width="3" height="16" fill="#333"/>
<rect x="106" y="0" width="8" height="4" fill="#3a3a3a"/>
<rect x="145" y="-3" width="60" height="30" fill="#a39e92"/>
<rect x="150" y="0" width="17" height="12" fill="#3c3c3c"/><rect x="177" y="0" width="17" height="13" fill="#3c3c3c"/>
<path d="M140,15 q14,-6 28,-2 q8,-8 18,-4 q10,2 16,6 v18 h-62z" fill="#6e744c"/>
<path d="M168,14 q6,-8 10,0 q2,6 -2,12 h-8z" fill="#b8a040"/>
<rect x="140" y="26" width="65" height="6" fill="#cfc6ac"/>
<path d="M140,32 L205,40 V46 L140,40z" fill="#4a4a4c"/>
<rect x="-3" y="28" width="12" height="7" fill="#d8c04a"/>
<rect x="-3" y="35" width="8" height="16" fill="#7d9a55"/>
<rect x="-3" y="50" width="12" height="8" fill="#d8c04a"/>
<path d="M176,46 L205,44 V82 L178,80z" fill="#7f9c5a"/>
<path d="M165,84 L205,80 V94 L170,91z" fill="#cdb54a"/>
<rect x="190" y="-3" width="7" height="78" fill="#1e1e1e"/>
<ellipse cx="100" cy="86" rx="95" ry="9" fill="#2e2e30"/>
<path d="M8,26 Q22,18 42,12 Q58,9.5 80,11.5 Q105,13.5 125,20 L145,36 Q170,44 190,53 Q195,60 194,70 L193,77 Q180,82 150,86 Q135,91 122,90 Q105,85 80,79 Q55,73 32,68 Q18,70 10,63 Q3,55 4,42 Q4,31 8,26 Z" fill="#18191c"/>
<path d="M24,25 Q35,16 46,13 L75,12.5 Q88,14 92,15.5 L100,35 Q70,33 30,30 Q24,28 24,25z" fill="#3c4149"/>
<path d="M60,13 L64,32 M76,13 L80,33" stroke="#15161a" stroke-width="1.5"/>
<path d="M92,15.5 L121,19.5 L145,36 L102,35 Z" fill="#7a8ca2"/>
<path d="M104,22 L125,24 L135,33 L108,32z" fill="#9fb0c2"/>
<path d="M30,36 Q70,38 110,44 Q125,47 140,48 L140,52 Q110,50 70,44 Q45,41 28,40z" fill="#3a3d42"/>
<path d="M137,55 L162,54 L165,62 L141,62 Z" fill="#c6cad0"/>
<path d="M176,57 L192,59 L193,75 L179,76 Z" fill="#2c2e33"/>
<rect x="180" y="67" width="9" height="8" fill="#e6e6e6"/>
<rect x="146" y="76" width="7" height="4" fill="#d07a30"/>
<circle cx="19.6" cy="58" r="10" fill="#1e1e1e"/><circle cx="19.6" cy="58" r="7" fill="#8e8e8e"/><circle cx="19.6" cy="58" r="3" fill="#5a5a5a"/>
<circle cx="112" cy="75" r="12.5" fill="#1e1e1e"/><circle cx="112" cy="75" r="9" fill="#858585"/><circle cx="112" cy="75" r="3.5" fill="#555"/>
</g></g>
</svg>
<script>(function(){try{var w=window.innerWidth;if(w&&Math.abs(w-2880)>4){document.documentElement.style.zoom=(w/2880);}}catch(e){}})();</script>
</body></html>
